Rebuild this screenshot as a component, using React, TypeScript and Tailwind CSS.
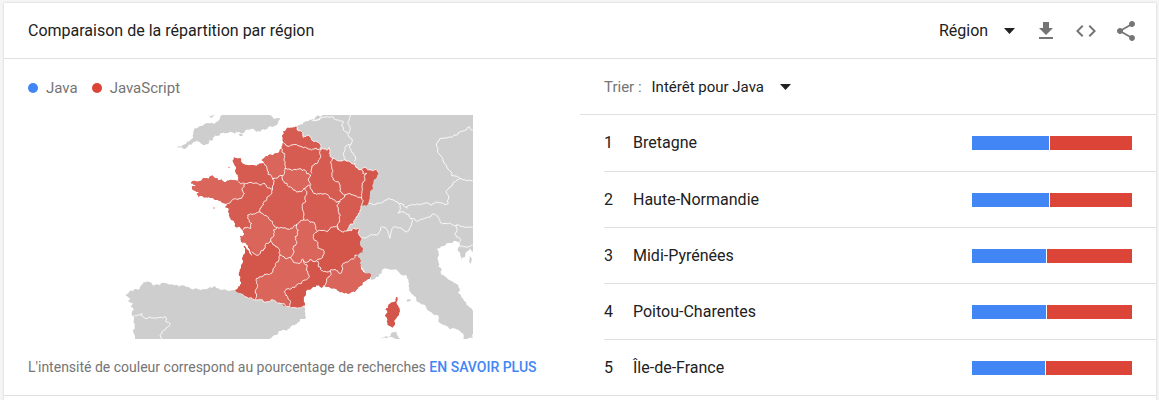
import { MdCode, MdShare } from "react-icons/md";

type Point = [number, number];

/* Deterministic offset for the midpoint of a segment, so that shared borders stay shared. */
function noise(x: number, y: number): number {
  const s = Math.sin(x * 12.9898 + y * 78.233) * 43758.5453;
  return (s - Math.floor(s)) * 2 - 1;
}

function parse(text: string): Point[] {
  return text.split(" ").map((pair) => pair.split(",").map(Number) as Point);
}

function roughen(points: Point[], passes: number, amount: number): Point[] {
  let current = points;
  for (let pass = 0; pass < passes; pass += 1) {
    const next: Point[] = [current[0]];
    for (let i = 1; i < current.length; i += 1) {
      const [ax, ay] = current[i - 1];
      const [bx, by] = current[i];
      const length = Math.hypot(bx - ax, by - ay);
      const mx = (ax + bx) / 2;
      const my = (ay + by) / 2;
      if (length > 5 && length < 90) {
        const shift = noise(mx, my) * length * amount;
        const side = ax < bx || (ax === bx && ay < by) ? 1 : -1;
        next.push([
          mx - (side * shift * (by - ay)) / length,
          my + (side * shift * (bx - ax)) / length,
        ]);
      }
      next.push([bx, by]);
    }
    current = next;
  }
  return current;
}

function toPath(text: string, closed: boolean): string {
  const points = parse(text);
  const ring = closed ? [...points, points[0]] : points;
  const line = roughen(ring, 3, 0.24)
    .map(([x, y]) => `${x.toFixed(1)},${y.toFixed(1)}`)
    .join("L");
  return `M${line}${closed ? "Z" : ""}`;
}

const NEIGHBOURS = [
  // England
  "340,30 480,30 495,42 510,40 505,55 480,63 460,72 440,80 400,85 375,87 350,85 330,88 310,97 303,108 297,105 295,118 285,120 270,112 250,112 235,120 225,132 215,127 202,129 205,124 220,120 240,105 250,85 255,70 280,60 298,55 320,50 330,38",
  "288,30 315,30 302,39",
  "386,88 396,87 400,91 392,94",
  // Iberia
  "375,555 350,555 325,550 300,547 280,552 255,550 225,543 190,540 150,540 130,542 125,535 100,533 90,543 88,553 60,558 47,572 60,580 55,590 70,595 62,605 72,615 65,630 70,650 75,702 480,702 500,690 540,670 560,657 588,640 586,625 582,606 562,600 530,590 510,580 483,570 437,565 395,560",
  // Central Europe and Italy
  "560,62 585,50 600,43 615,40 640,30 1089,30 1089,440 1080,430 1070,440 1053,465 1043,435 1048,413 1030,410 995,423 980,430 982,460 985,485 995,510 1020,525 1045,540 1058,580 1070,600 1089,623 1089,702 1060,702 1045,675 1020,673 985,650 960,620 930,595 910,570 898,535 885,510 850,495 825,490 805,515 783,525 770,510 700,400 600,150",
  // Sardinia
  "805,702 835,695 845,683 858,680 870,702",
  // Adriatic and Tuscan islands
  "1076,450 1081,455 1082,476 1077,468",
  "890,586 904,585 900,589 892,590",
];

const FRANCE =
  "519,78 545,68 560,62 562,75 578,83 580,97 595,90 605,105 612,110 628,115 632,133 650,135 658,127 658,145 670,160 690,168 705,165 720,170 735,175 740,188 755,193 780,195 805,203 798,220 787,240 780,265 775,297 765,300 753,302 750,315 735,343 718,362 710,378 725,377 732,370 745,370 745,385 755,400 750,410 758,430 758,442 742,450 750,460 750,475 755,495 765,505 783,508 780,517 762,530 745,545 735,560 715,567 690,562 670,550 658,545 645,543 635,548 625,540 605,550 588,563 582,575 582,603 562,610 545,609 530,605 510,595 483,585 465,592 437,585 415,580 395,567 375,555 385,545 392,515 398,475 401,425 398,415 396,395 402,385 395,373 375,365 362,345 358,325 355,310 345,305 350,298 335,292 315,285 290,277 265,275 260,268 270,262 250,255 245,245 262,240 243,235 250,228 270,228 280,220 295,222 300,214 310,213 325,225 345,232 360,225 385,228 383,215 378,190 368,165 370,155 390,158 395,172 415,180 440,182 462,175 455,165 465,155 495,145 515,130 520,112";

const CORSICA =
  "859,575 860,590 866,607 862,635 855,655 848,668 833,660 830,640 825,630 832,623 825,613 837,597 855,590";

const LIGHT_REGIONS = [
  // Bretagne
  "385,230 403,236 403,265 390,280 365,287 345,298 350,298 335,292 315,285 290,277 265,275 260,268 270,262 250,255 245,245 262,240 243,235 250,228 270,228 280,220 295,222 300,214 310,213 325,225 345,232 360,225 385,228",
  // Haute-Normandie
  "462,175 472,195 485,215 488,222 505,217 516,212 525,190 525,170 523,145 515,130 495,145 465,155 455,165",
  // Île-de-France
  "525,190 555,193 585,195 602,210 598,230 600,242 582,250 575,260 555,255 535,245 522,230 516,212",
  // Poitou-Charentes
  "450,322 470,333 488,350 500,367 490,375 492,390 482,407 465,430 445,450 425,440 410,420 400,412 398,395 402,385 398,375 422,370 425,355 418,345 413,330 430,327",
  // Limousin
  "500,367 525,368 550,367 560,358 565,375 555,395 560,415 550,435 542,457 525,460 510,450 505,430 490,420 482,407 492,390 490,375",
  // Auvergne
  "560,358 580,345 600,352 615,358 622,380 610,395 622,410 625,430 643,440 635,460 620,467 600,463 585,472 578,462 570,475 550,472 542,457 550,435 560,415 555,395 565,375",
  // Midi-Pyrénées
  "510,450 525,460 542,457 550,472 570,475 578,462 580,467 588,495 598,515 575,535 555,547 528,553 533,575 538,602 510,595 483,585 465,592 437,585 436,584 440,570 442,545 440,520 460,513 485,505 490,490 505,470",
  // Provence
  "660,497 675,493 690,505 697,495 695,483 715,470 730,462 735,450 742,450 750,460 750,475 755,495 765,505 783,508 780,517 762,530 745,545 735,560 715,567 690,562 670,550 658,545 645,543 640,543 650,530 658,515",
];

const DARK_REGIONS = [
  // Rhône-Alpes
  "622,380 650,380 660,370 680,363 688,375 710,378 725,377 732,370 745,370 745,385 755,400 750,410 758,430 758,442 742,450 735,450 730,462 715,470 695,483 697,495 690,505 675,493 660,497 635,497 625,485 620,467 635,460 643,440 625,430 622,410 610,395",
  // Aquitaine
  "401,425 410,420 425,440 445,450 465,430 482,407 490,420 505,430 510,450 505,470 490,490 485,505 460,513 440,520 442,545 440,570 436,584 415,580 395,567 375,555 385,545 392,515 398,475",
  // Languedoc-Roussillon
  "585,472 600,463 620,467 625,485 635,497 660,497 658,515 650,530 640,543 635,548 625,540 605,550 588,563 582,575 582,603 562,610 545,609 538,605 533,575 528,553 555,547 575,535 598,515 588,495 580,467",
  // Alsace
  "755,193 780,195 805,203 798,220 787,240 780,265 775,297 765,300 755,300 755,275 758,250 765,225 762,215 770,205 758,205",
];

const REGION_BORDERS = [
  "520,113 545,120 580,128 605,135 632,134",
  "632,134 632,155 622,175 610,180 605,205",
  "525,190 555,193 585,195 602,210",
  "602,210 598,230 600,242 582,250 575,260 555,255 535,245 522,230 516,212",
  "462,175 472,195 485,215 488,222",
  "488,222 505,217 516,212",
  "515,130 523,145 525,170 525,190 516,212",
  "385,230 403,236 430,235 450,240 465,236 480,250 488,252 490,240 493,228 488,222",
  "403,236 403,265 390,280 365,287 345,298",
  "488,252 485,265 470,285 460,300 450,322",
  "450,322 430,327 413,330 418,345 425,355 422,370 398,375",
  "450,322 470,333 488,350 500,367",
  "500,367 525,368 550,367 560,358",
  "582,250 585,280 577,305 582,330 580,345",
  "560,358 580,345 600,352 615,358 622,380",
  "622,380 610,395 622,410 625,430 643,440 635,460 620,467",
  "620,467 600,463 585,472 578,462 570,475 550,472 542,457",
  "500,367 490,375 492,390 482,407 490,420 505,430 510,450 525,460 542,457 550,435 560,415 555,395 565,375 560,358",
  "482,407 465,430 445,450 425,440",
  "510,450 505,470 490,490 485,505 460,513 440,520 442,545 440,570 436,584",
  "580,467 588,495 598,515 575,535 555,547 528,553 533,575 538,605",
  "620,467 625,485 635,497 660,497 658,515 650,530 640,543",
  "660,497 675,493 690,505 697,495 695,483 715,470 730,462 735,450 742,450",
  "670,160 665,185 665,215 680,230 690,255 705,270",
  "600,242 620,268 650,268 670,285 690,290 705,270",
  "690,290 685,320 688,340 685,355 685,375",
  "622,380 650,380 660,370 680,363 688,375 710,378",
  "705,270 720,265 735,272 755,278",
  "755,193 758,205 770,205 762,215 765,225 758,250 755,275 755,300",
];

const COUNTRY_BORDERS = [
  "560,62 562,75 578,83 580,97 595,90 605,105 612,110 628,115 632,133 650,135 658,127 658,145 670,160 690,168 705,165 720,170 735,175 740,188 755,193 780,195 805,203",
  "753,302 750,315 735,343 718,362 710,378 725,377 732,370 745,370 745,385 755,400",
  "582,603 562,610 545,609 530,605 510,595 483,585 465,592 437,585 415,580 395,567",
  "600,42 630,42 645,36 670,36 685,45 700,50 700,75 715,85 720,65 718,45 722,30",
  "600,36 615,46 635,36",
  "715,85 728,105 720,120 730,145 732,168",
  "720,120 705,130 700,150 705,165",
  "1088,75 1078,65 1068,74 1040,90 980,115 990,150 1010,185 1055,222 1088,228",
  "1055,222 1030,232 1008,260 1015,295 980,292 960,300 910,298 890,310 865,295 825,285 805,295 776,296",
  "865,295 865,325 902,340 905,360 898,372 885,380 875,370 855,365 840,400 815,365 802,390 775,395 755,400",
  "902,340 940,342 975,328 990,350 1015,356 1040,360 1088,367",
  "1040,360 1035,385 1050,400 1048,413",
  "1048,425 1065,425 1088,420",
  "70,632 95,625 105,640 135,640 165,635 168,650 180,658 165,675 150,690 155,702",
];

const ESTUARY = "398,412 408,417 416,430 421,440 426,453 419,445 411,432 402,422";

function RegionMap() {
  return (
    <svg
      viewBox="6 30 1083 672"
      role="img"
      aria-label="France"
      className="block h-auto w-[361px] max-w-full"
    >
      <g fill="#cecece">
        {NEIGHBOURS.map((d) => (
          <path key={d} d={toPath(d, true)} />
        ))}
      </g>
      <g fill="#d65c52">
        <path d={toPath(FRANCE, true)} />
        <path d={toPath(CORSICA, true)} fill="#d4564b" />
        <circle cx="357" cy="187" r="2" />
        <circle cx="312" cy="309" r="2" />
        <circle cx="393" cy="395" r="3" />
      </g>
      <g fill="#d9655b">
        {LIGHT_REGIONS.map((d) => (
          <path key={d} d={toPath(d, true)} />
        ))}
      </g>
      <g fill="#d4564b">
        {DARK_REGIONS.map((d) => (
          <path key={d} d={toPath(d, true)} />
        ))}
      </g>
      <path d={toPath(ESTUARY, true)} fill="#fff" />
      <g fill="none" stroke="#fff" strokeWidth="3" strokeLinejoin="round" strokeOpacity="0.88">
        {REGION_BORDERS.map((d) => (
          <path key={d} d={toPath(d, false)} />
        ))}
        {COUNTRY_BORDERS.map((d) => (
          <path key={d} d={toPath(d, false)} />
        ))}
      </g>
    </svg>
  );
}

function DownloadIcon() {
  return (
    <svg viewBox="0 0 24 24" className="size-6" fill="currentColor" aria-hidden="true">
      <path d="M19 9h-4V3H9v6H5l7 7 7-7zM5 18v2h14v-2H5z" />
    </svg>
  );
}

function Picker({
  id,
  label,
  value,
  size,
}: {
  id: string;
  label?: string;
  value: string;
  size: string;
}) {
  return (
    <span className="relative flex items-center">
      <select
        id={id}
        aria-label={label}
        className={`appearance-none bg-transparent pr-10 leading-6 text-[#212121] outline-none ${size}`}
      >
        <option>{value}</option>
      </select>
      <svg
        viewBox="0 0 11 6"
        aria-hidden="true"
        className="pointer-events-none absolute right-[14px] h-[6px] w-[11px]"
        fill="#212121"
      >
        <path d="M0 0h11L5.5 6z" />
      </svg>
    </span>
  );
}

const ROWS = [
  { name: "Bretagne", java: 77 },
  { name: "Haute-Normandie", java: 77 },
  { name: "Midi-Pyrénées", java: 74 },
  { name: "Poitou-Charentes", java: 74 },
  { name: "Île-de-France", java: 73 },
];
const BAR_TOTAL = 160;

export default function App() {
  return (
    <div className="flex min-h-screen bg-[#f5f5f5] pt-[3px] pr-[3px] pl-1 font-['Roboto',sans-serif] text-base text-[#212121]">
      <section className="flex-1 bg-white shadow-[0_0_2px_rgba(0,0,0,0.18)]">
        <header className="flex h-14 items-center border-b border-[#e0e0e0] pr-[18px] pl-6">
          <h2 className="flex-1 leading-6">Comparaison de la répartition par région</h2>
          <Picker id="resolution" label="Résolution" value="Région" size="text-base" />
          <div className="flex gap-4 pl-[5px] text-[#757575]">
            <button type="button" aria-label="Télécharger">
              <DownloadIcon />
            </button>
            <button type="button" aria-label="Intégrer">
              <MdCode className="size-6" />
            </button>
            <button type="button" aria-label="Partager">
              <MdShare className="size-6" />
            </button>
          </div>
        </header>

        <div className="grid grid-cols-2 border-b border-[#e0e0e0]">
          <div className="flex flex-col">
            <ul className="flex h-14 items-center gap-[14px] pt-[2px] pl-6 text-[15px] leading-6 text-[#757575]">
              <li className="flex items-center gap-2">
                <span className="size-[10px] rounded-full bg-[#4285f4]" />
                Java
              </li>
              <li className="flex items-center gap-2">
                <span className="size-[10px] rounded-full bg-[#db4437]" />
                JavaScript
              </li>
            </ul>
            <div className="flex justify-center">
              <RegionMap />
            </div>
            <div className="flex flex-1 items-center pl-6 text-sm text-[#757575]">
              <p>
                L'intensité de couleur correspond au pourcentage de recherches{" "}
                <a href="#aide" className="font-medium text-[#4285f4]">
                  EN SAVOIR PLUS
                </a>
              </p>
            </div>
          </div>

          <div>
            <div className="flex h-14 items-center gap-[10px] border-b border-[#e0e0e0] pt-px pl-6">
              <label htmlFor="sort" className="text-[15px] text-[#757575]">
                Trier :
              </label>
              <Picker id="sort" value="Intérêt pour Java" size="text-[15px]" />
            </div>
            <ol className="pl-6">
              {ROWS.map((row, index) => (
                <li
                  key={row.name}
                  className="flex h-14 items-center border-t border-[#e0e0e0] pr-6 first:border-t-0"
                >
                  <span className="w-[29px]">{index + 1}</span>
                  <span className="flex-1">{row.name}</span>
                  <span className="flex h-[14px] w-40 gap-px">
                    <span
                      className="bg-[#4285f4]"
                      style={{ width: `${(row.java / BAR_TOTAL) * 100}%` }}
                    />
                    <span className="flex-1 bg-[#db4437]" />
                  </span>
                </li>
              ))}
            </ol>
          </div>
        </div>
      </section>
    </div>
  );
}
